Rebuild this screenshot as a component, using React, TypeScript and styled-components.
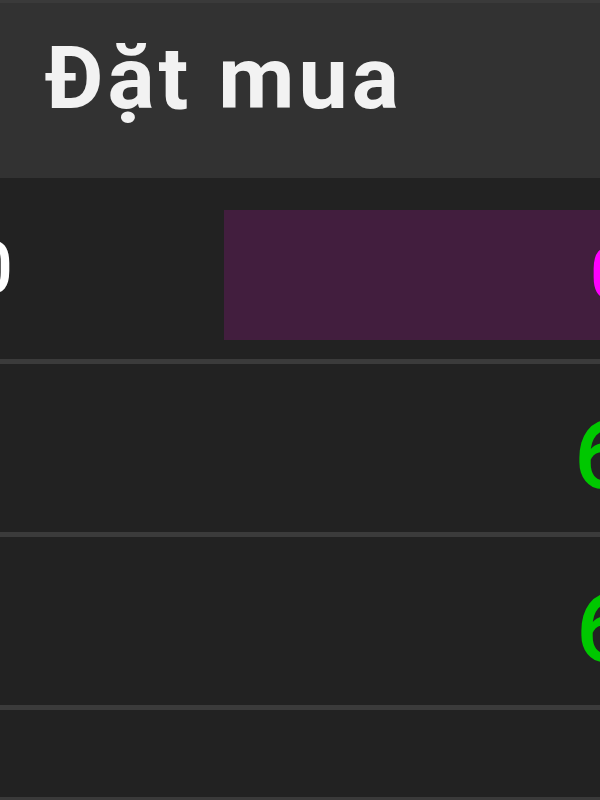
import styled, { createGlobalStyle } from "styled-components";

const GlobalStyle = createGlobalStyle`
  *, *::before, *::after {
    box-sizing: border-box;
  }
  html, body {
    margin: 0;
    padding: 0;
    background: #222222;
    overflow: hidden;
  }
  body {
    font-family: Roboto, "Liberation Sans", Arial, sans-serif;
  }
`;

// 페이지 전체
const Page = styled.div`
  width: 600px;
  height: 800px;
  overflow: hidden;
  background: #222222;
  display: flex;
  flex-direction: column;
`;

// 상단 제목 줄
const Header = styled.div`
  height: 178px;
  flex-shrink: 0;
  border-top: 3px solid #3a3a3a;
  background: #323232;
  display: flex;
  align-items: center;
  padding-left: 45px;
`;

const Title = styled.h1`
  margin: 0;
  padding-bottom: 26px;
  font-family: Roboto, "Liberation Sans", sans-serif;
  font-weight: 700;
  font-size: 88px;
  letter-spacing: 4px;
  color: #f2f2f2;
`;

// 표의 한 줄
const Row = styled.div<{ $h: number }>`
  height: ${(p) => p.$h}px;
  flex-shrink: 0;
  display: grid;
  grid-template-columns: 224px 1fr;
  align-items: center;
  border-bottom: 5px solid #3b3b3b;
`;

// 왼쪽 칸: 숫자가 화면 왼쪽 밖으로 넘침
const LeftCell = styled.div`
  display: flex;
  justify-content: flex-end;
  padding-right: 211px;
  white-space: nowrap;
  font-size: 72px;
  font-weight: 500;
  color: #ffffff;
`;

const PriceBox = styled.div<{ $bg?: string }>`
  height: 130px;
  margin-top: 13px;
  background: ${(p) => p.$bg || "transparent"};
  display: flex;
  align-items: center;
  padding-left: 366px;
  white-space: nowrap;
`;

const Num = styled.span<{ $color: string; $size: number }>`
  font-family: Roboto, "Liberation Sans", sans-serif;
  font-weight: 500;
  font-size: ${(p) => p.$size}px;
  color: ${(p) => p.$color};
  line-height: 1;
`;

const Rest = styled.div`
  flex: 1;
  border-bottom: 3px solid #3a3a3a;
`;

export default function App() {
  return (
    <Page>
      <GlobalStyle />
      <Header>
        <Title>Đặt mua</Title>
      </Header>
      <Row $h={186}>
        <LeftCell>
          <span>0</span>
        </LeftCell>
        <PriceBox $bg="#421e3e">
          <Num $color="#ff00ff" $size={72}>
            0
          </Num>
        </PriceBox>
      </Row>
      <Row $h={173}>
        <div />
        <PriceBox>
          <Num $color="#00c800" $size={96} style={{ marginLeft: -16 }}>
            6
          </Num>
        </PriceBox>
      </Row>
      <Row $h={173}>
        <div />
        <PriceBox>
          <Num $color="#00c800" $size={96} style={{ marginLeft: -14 }}>
            6
          </Num>
        </PriceBox>
      </Row>
      <Rest />
    </Page>
  );
}
